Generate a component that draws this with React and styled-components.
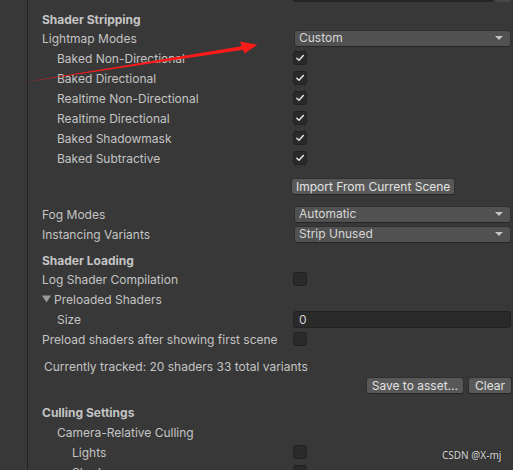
import React from "react";
import styled, { createGlobalStyle } from "styled-components";

const GlobalStyle = createGlobalStyle`
  html, body {
    margin: 0;
    background: #383838;
  }
  * { box-sizing: border-box; }
`;

const Window = styled.div`
  position: relative;
  width: 513px;
  height: 470px;
  overflow: hidden;
  display: flex;
  background: #383838;
  font-family: Inter, "Noto Sans", sans-serif;
  font-size: 12px;
  color: #c4c4c4;
`;

const Gutter = styled.div`
  width: 28px;
  flex-shrink: 0;
  border-right: 1px solid #232323;
`;

const Inspector = styled.div`
  flex: 1;
  display: flex;
  flex-direction: column;
  padding: 0 0 0 14px;
  & > * { flex-shrink: 0; }
`;

const Stub = styled.div`
  display: flex;
  gap: 2px;
  margin-left: 251px;
  height: 2px;
  margin-right: 2px;
`;

const StubPart = styled.div`
  height: 2px;
  flex: ${p => (p.$grow ? 1 : "none")};
  width: ${p => (p.$grow ? "auto" : "16px")};
  background: ${p => (p.$grow ? "#252525" : "#474747")};
  border-radius: 0 0 3px 3px;
`;

const Header = styled.div`
  font-weight: 700;
  line-height: 16px;
  margin-top: ${p => p.$top}px;
  white-space: nowrap;
`;

const Row = styled.div`
  display: grid;
  grid-template-columns: 251px 1fr;
  align-items: center;
  height: 20px;
  padding-right: 2px;
  margin-top: ${p => p.$top || 0}px;
`;

const Label = styled.div`
  padding-left: ${p => (p.$indent || 0) * 15}px;
  white-space: nowrap;
  display: flex;
  align-items: center;
  gap: 3px;
`;

const Value = styled.div`
  display: flex;
  align-items: center;
  min-width: 0;
`;

const Dropdown = styled.div`
  margin-left: 1px;
  flex: 1;
  height: 17px;
  line-height: 16px;
  padding-left: 4px;
  border-radius: 3px;
  background: #515151;
  border: 1px solid #303030;
  border-bottom-color: #262626;
  color: #d6d6d6;
  display: flex;
  align-items: center;
  justify-content: space-between;
  padding-right: 7px;
`;

const Caret = styled.span`
  width: 0;
  height: 0;
  border-left: 4px solid transparent;
  border-right: 4px solid transparent;
  border-top: 4px solid #c4c4c4;
`;

const Box = styled.div`
  width: 14px;
  height: 14px;
  border-radius: 3px;
  background: #2a2a2a;
  border: 1px solid #212121;
  display: flex;
  align-items: center;
  justify-content: center;
`;

const Field = styled.div`
  flex: 1;
  height: 17px;
  border-radius: 3px;
  background: #2a2a2a;
  border: 1px solid #212121;
  padding-left: 5px;
  line-height: 15px;
  color: #d2d2d2;
`;

const Button = styled.div`
  height: 17px;
  line-height: 15px;
  padding: 0 ${p => p.$pad || 6}px;
  border-radius: 3px;
  background: #585858;
  border: 1px solid #303030;
  border-bottom-color: #242424;
  color: #e2e2e2;
  white-space: nowrap;
  margin-left: ${p => p.$shift || 0}px;
`;

const ButtonRow = styled.div`
  display: flex;
  justify-content: flex-end;
  gap: 4px;
  height: 18px;
  padding-right: 1px;
  align-items: center;
`;

const Note = styled.div`
  padding-left: 2px;
  height: 18px;
  line-height: 18px;
  margin-top: ${p => p.$top}px;
  white-space: nowrap;
`;

const Watermark = styled.div`
  position: absolute;
  left: 442px;
  top: 448px;
  font-family: "Noto Sans", sans-serif;
  font-size: 10px;
  color: #d8d8d8;
  text-shadow: 0 0 1px #202020;
`;

const Overlay = styled.svg`
  position: absolute;
  left: 0;
  top: 0;
  pointer-events: none;
`;

const Check = ({ on }) => (
  <Box>
    {on && (
      <svg width="10" height="10" viewBox="0 0 10 10">
        <path d="M1.8 5.2 L4 7.3 L8.3 2.6" fill="none" stroke="#e4e4e4" strokeWidth="1.5" strokeLinecap="round" strokeLinejoin="round" />
      </svg>
    )}
  </Box>
);

const Select = ({ children }) => (
  <Dropdown>
    <span>{children}</span>
    <Caret />
  </Dropdown>
);

const Fold = () => (
  <svg width="9" height="8" viewBox="0 0 9 8">
    <path d="M0 0.5 H9 L4.5 7.5 Z" fill="#9a9a9a" />
  </svg>
);

const modes = [
  "Baked Non-Directional",
  "Baked Directional",
  "Realtime Non-Directional",
  "Realtime Directional",
  "Baked Shadowmask",
  "Baked Subtractive",
];

export default function App() {
  return (
    <Window>
      <GlobalStyle />
      <Gutter />
      <Inspector>
        <Stub>
          <StubPart $grow />
          <StubPart />
        </Stub>

        <Header $top={10}>Shader Stripping</Header>
        <Row>
          <Label>Lightmap Modes</Label>
          <Value><Select>Custom</Select></Value>
        </Row>
        {modes.map(m => (
          <Row key={m}>
            <Label $indent={1}>{m}</Label>
            <Value><Check on /></Value>
          </Row>
        ))}
        <Row $top={8}>
          <Label />
          <Value><Button $shift={-2} $pad={4}>Import From Current Scene</Button></Value>
        </Row>
        <Row $top={8}>
          <Label>Fog Modes</Label>
          <Value><Select>Automatic</Select></Value>
        </Row>
        <Row>
          <Label>Instancing Variants</Label>
          <Value><Select>Strip Unused</Select></Value>
        </Row>

        <Header $top={9}>Shader Loading</Header>
        <Row>
          <Label>Log Shader Compilation</Label>
          <Value><Check /></Value>
        </Row>
        <Row>
          <Label><Fold />Preloaded Shaders</Label>
          <Value />
        </Row>
        <Row>
          <Label $indent={1}>Size</Label>
          <Value><Field>0</Field></Value>
        </Row>
        <Row>
          <Label>Preload shaders after showing first scene</Label>
          <Value><Check /></Value>
        </Row>
        <Note $top={9}>Currently tracked: 20 shaders 33 total variants</Note>
        <ButtonRow>
          <Button $pad={5}>Save to asset...</Button>
          <Button $pad={6}>Clear</Button>
        </ButtonRow>

        <Header $top={11}>Culling Settings</Header>
        <Row $top={1}>
          <Label $indent={1}>Camera-Relative Culling</Label>
          <Value />
        </Row>
        <Row>
          <Label $indent={2}>Lights</Label>
          <Value><Check /></Value>
        </Row>
        <Row>
          <Label $indent={2}>Shadows</Label>
          <Value><Check /></Value>
        </Row>
      </Inspector>

      <Overlay width="513" height="470" viewBox="0 0 513 470">
        <polygon points="22,82.5 243,46 243.5,49.8" fill="#ff1a1a" />
        <polygon points="240,41.5 257.5,44.8 244.5,53.5" fill="#ff1a1a" />
      </Overlay>
      <Watermark>CSDN @X-mj</Watermark>
    </Window>
  );
}
